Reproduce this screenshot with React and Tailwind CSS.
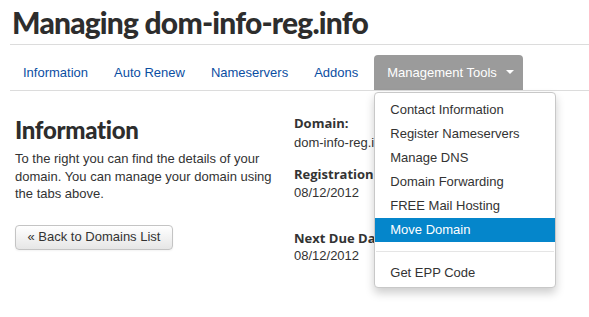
export default function App() {
  const tabs = ["Information", "Auto Renew", "Nameservers", "Addons"];
  const menu = [
    "Contact Information",
    "Register Nameservers",
    "Manage DNS",
    "Domain Forwarding",
    "FREE Mail Hosting",
  ];

  return (
    <div className="w-[589px] h-[317px] bg-white overflow-hidden pl-[10px] text-[#333] text-[13px]" style={{ fontFamily: '"Liberation Sans", Arial, sans-serif' }}>
      <div className="border-b border-[#dcdcdc] h-[45px] pl-[2px] pt-[5px]">
        <h1 className="text-[30px] leading-[34px] font-black text-[#2d2d2d] tracking-[-0.8px]" style={{ fontFamily: 'Lato, sans-serif' }}>
          Managing dom-info-reg.info
        </h1>
      </div>

      <div className="flex items-end h-[46px] border-b border-[#dcdcdc] pl-[1px]">
        {tabs.map((t) => (
          <div key={t} className="h-[35px] px-3 mr-[2px] flex items-center text-[#0b4ea2]">
            {t}
          </div>
        ))}
        <div className="relative ml-[2px]">
          <div className="h-[35px] w-[149px] pl-[13px] flex items-center gap-[9px] bg-[#9b9b9b] rounded-t-[4px] text-white">
            Management Tools
            <span className="w-0 h-0 border-l-[4px] border-r-[4px] border-t-[4px] border-l-transparent border-r-transparent border-t-white mt-[-2px]" />
          </div>
          <div className="absolute left-0 top-[37px] w-[182px] bg-white border border-[#c8c8c8] rounded-[4px] shadow-[0_5px_10px_rgba(0,0,0,0.2)] pt-[5px] pb-[2px] z-10">
            {menu.map((m) => (
              <div key={m} className="h-[24px] flex items-center pl-[15px] text-[#333]">
                {m}
              </div>
            ))}
            <div className="h-[24px] flex items-center pl-[15px] bg-[#0586cb] text-white">
              Move Domain
            </div>
            <div className="h-px bg-[#e5e5e5] my-[9px] mx-px" />
            <div className="h-[24px] flex items-center pl-[15px] text-[#333]">
              Get EPP Code
            </div>
          </div>
        </div>
      </div>

      <div className="flex pt-[23px]">
        <div className="w-[284px] pl-[5px]">
          <h2 className="text-[24px] leading-[32px] font-black text-[#2d2d2d] tracking-[-0.3px]" style={{ fontFamily: 'Lato, sans-serif' }}>
            Information
          </h2>
          <p className="leading-[17.5px] mt-[4px] w-[265px]">
            To the right you can find the details of your domain. You can manage your domain using the tabs above.
          </p>
          <button className="mt-[22px] h-[25px] w-[158px] border border-[#c4c4c4] rounded-[4px] bg-gradient-to-b from-white to-[#e6e6e6] text-[#333] text-[13px] shadow-[inset_0_1px_0_rgba(255,255,255,0.2),0_1px_2px_rgba(0,0,0,0.05)]">
            « Back to Domains List
          </button>
        </div>
        <div className="flex flex-col">
          <div className="font-bold leading-[18px]" style={{ fontFamily: '"Open Sans", sans-serif' }}>Domain:</div>
          <div className="leading-[18px] mt-[2px]">dom-info-reg.info</div>
          <div className="font-bold leading-[18px] mt-[13px]" style={{ fontFamily: '"Open Sans", sans-serif' }}>Registration Date:</div>
          <div className="leading-[18px] mt-[1px]">08/12/2012</div>
          <div className="font-bold leading-[18px] mt-[27px]" style={{ fontFamily: '"Open Sans", sans-serif' }}>Next Due Date:</div>
          <div className="leading-[18px]">08/12/2012</div>
        </div>
      </div>
    </div>
  );
}
